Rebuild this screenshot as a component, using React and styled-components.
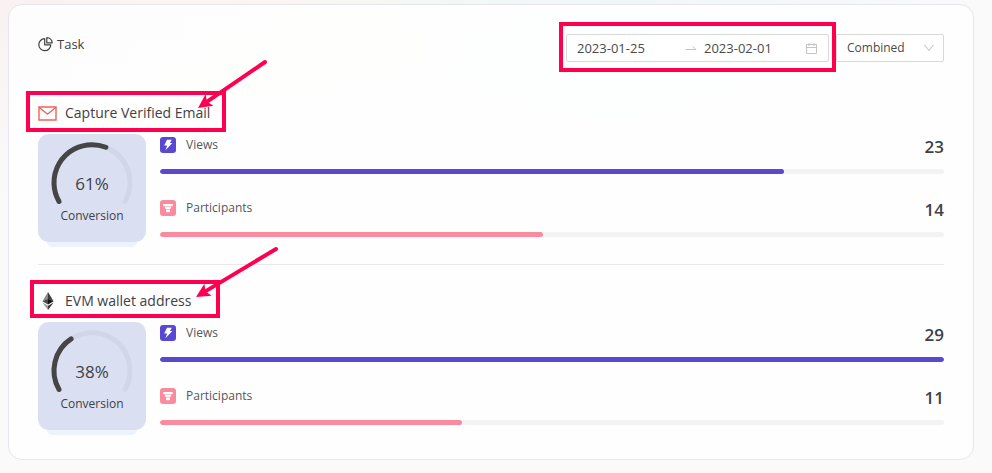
import React from "react";
import styled, { createGlobalStyle } from "styled-components";

const GlobalStyle = createGlobalStyle`
  *, *::before, *::after { box-sizing: border-box; }
  body {
    margin: 0;
    background:
      linear-gradient(to bottom, transparent, #fafafa 200px),
      linear-gradient(to right, #f9f1f2, #faf6f2 28%, #f3f8f5 48%, #f0f7f8 62%, #f6f7fb 85%, #fafafa);
    background-color: #fafafa;
    background-repeat: no-repeat;
    color: #3f4145;
    font-family: "Open Sans", "Noto Sans", sans-serif;
    font-size: 13px;
    line-height: 20px;
  }
  h2, h3, p { margin: 0; }
`;

const Page = styled.main`
  padding: 4px 18px 13px 8px;
`;

const Card = styled.section`
  padding: 29px;
  border: 1px solid #e6e7ec;
  border-radius: 14px;
  background: rgba(255, 255, 255, 0.82);
`;

const Header = styled.header`
  display: flex;
  align-items: center;
  justify-content: space-between;
  height: 28px;
`;

const Heading = styled.h2`
  display: flex;
  align-items: center;
  gap: 4px;
  align-self: flex-start;
  font-size: 13px;
  font-weight: 500;
  line-height: 20px;
`;

const Filters = styled.div`
  display: flex;
  gap: 7px;
`;

const Field = styled.div`
  position: relative;
  display: flex;
  align-items: center;
  width: ${(p) => p.$width}px;
  height: 28px;
  border: 1px solid #d9d9d9;
  border-radius: 2px;
  background: #fff;
  padding-left: 10px;
  padding-right: ${(p) => p.$end}px;
  svg { flex: none; }
`;

const DateInput = styled.input`
  flex: 1;
  min-width: 0;
  width: 0;
  padding: 0;
  border: 0;
  outline: 0;
  background: transparent;
  color: #4a4a4a;
  font: inherit;
  font-size: 13px;
`;

const Separator = styled.span`
  display: flex;
  width: 26px;
  justify-content: center;
`;

const Select = styled.select`
  appearance: none;
  flex: 1;
  min-width: 0;
  padding: 0;
  border: 0;
  outline: 0;
  background: transparent;
  color: #4a4a4a;
  font: inherit;
  font-size: 12px;
`;

const Highlight = styled.span`
  position: absolute;
  inset: ${(p) => p.$inset};
  border: 4px solid #ff0050;
  pointer-events: none;
`;

const Arrow = styled.svg`
  position: absolute;
  right: ${(p) => p.$right}px;
  bottom: ${(p) => p.$bottom}px;
`;

const Task = styled.article`
  padding-top: ${(p) => (p.$first ? "41px" : "26px")};
  & + & {
    margin-top: 22px;
    border-top: 1px solid #e8e8ea;
  }
`;

const TaskTitle = styled.h3`
  position: relative;
  display: inline-flex;
  align-items: center;
  gap: 8px;
  height: 20px;
  vertical-align: top;
  font-size: 14px;
  font-weight: 500;
`;

const IconSlot = styled.span`
  display: flex;
  justify-content: center;
  width: 19px;
`;

const TaskBody = styled.div`
  display: flex;
  gap: 14px;
  margin-top: 11px;
`;

const Conversion = styled.div`
  position: relative;
  display: flex;
  flex-direction: column;
  align-items: center;
  flex: none;
  width: 108px;
  height: 108px;
  padding-top: 6px;
  border-radius: 11px;
  background: #dae0f2;
  &::after {
    content: "";
    position: absolute;
    left: 9px;
    right: 9px;
    top: 100%;
    height: 5px;
    border-radius: 0 0 5px 5px;
    background: #eef2fb;
  }
`;

const Gauge = styled.div`
  display: grid;
  height: 66px;
  > * { grid-area: 1 / 1; }
`;

const GaugeValue = styled.span`
  align-self: start;
  justify-self: center;
  padding-top: 32px;
  font-size: 17px;
  font-weight: 500;
  line-height: 24px;
`;

const GaugeLabel = styled.span`
  font-size: 12px;
  font-weight: 500;
  line-height: 20px;
`;

const Metrics = styled.dl`
  display: flex;
  flex: 1;
  flex-direction: column;
  gap: 23px;
  min-width: 0;
  margin: 0;
`;

const Metric = styled.div`
  display: grid;
  grid-template-columns: 1fr auto;
  row-gap: 11px;
  padding-top: 1px;
`;

const MetricLabel = styled.dt`
  display: flex;
  align-items: center;
  gap: 10px;
  height: 19px;
  color: #55565a;
  font-size: 12px;
`;

const MetricValue = styled.dd`
  margin: 0;
  font-size: 17px;
  font-weight: 600;
  line-height: 24px;
  height: 23px;
`;

const Track = styled.div`
  grid-column: 1 / -1;
  height: 5px;
  border-radius: 3px;
  background: #f3f3f4;
  overflow: hidden;
`;

const Fill = styled.div`
  height: 100%;
  border-radius: 3px;
  background: ${(p) => p.$color};
`;

function PieIcon() {
  return (
    <svg width="15" height="15" viewBox="0 0 15 15" fill="none" stroke="#3f4145" strokeWidth="1.2" strokeLinejoin="round" aria-hidden="true">
      <path d="M6.7 1.7A6 6 0 1 0 12.8 7.8H6.7z" />
      <path d="M8.8.7V5.9H14.2A5.5 5.5 0 0 0 8.8.7z" />
    </svg>
  );
}

function CalendarIcon() {
  return (
    <svg width="13" height="13" viewBox="0 0 13 13" fill="none" stroke="#c4c4c4" aria-hidden="true">
      <path d="M1.5 2.5h10v9h-10zM1.5 5.5h10M4 1v3M9 1v3" />
    </svg>
  );
}

function SwapIcon() {
  return (
    <svg width="12" height="8" viewBox="0 0 12 8" fill="none" stroke="#c4c4c4" aria-hidden="true">
      <path d="M.5 5.5h10.4L7.6 2.2" />
    </svg>
  );
}

function ChevronIcon() {
  return (
    <svg width="12" height="12" viewBox="0 0 12 12" fill="none" stroke="#c4c4c4" strokeWidth="1.1" aria-hidden="true">
      <path d="M1.5 3l4.5 5.5L10.5 3" />
    </svg>
  );
}

function MailIcon() {
  return (
    <svg width="19" height="15" viewBox="0 0 19 15" fill="none" stroke="#ee6257" strokeWidth="1.4" aria-hidden="true">
      <path d="M1 1h17v13H1z" />
      <path d="M1 1.2l8.5 7 8.5-7" />
    </svg>
  );
}

function EthereumIcon() {
  return (
    <svg width="12" height="18" viewBox="0 0 12 18" aria-hidden="true">
      <path d="M6 0L.4 9.2 6 6.7z" fill="#8a8a8a" />
      <path d="M6 0l5.6 9.2L6 6.7z" fill="#3c3c3b" />
      <path d="M.4 9.2L6 6.7v5.8z" fill="#4a4a4a" />
      <path d="M11.6 9.2L6 6.7v5.8z" fill="#141414" />
      <path d="M.4 10.5L6 13.8V18z" fill="#9a9a9a" />
      <path d="M11.6 10.5L6 13.8V18z" fill="#3c3c3b" />
    </svg>
  );
}

function ViewsIcon() {
  return (
    <svg width="16" height="16" viewBox="0 0 16 16" aria-hidden="true">
      <rect width="16" height="16" rx="3" fill="#5949d2" />
      <path d="M7 2.8h4.8L9.9 6h2.5L5.4 13.2l1.8-4.6H4.2z" fill="#fff" />
    </svg>
  );
}

function FunnelIcon() {
  return (
    <svg width="16" height="16" viewBox="0 0 16 16" aria-hidden="true">
      <rect width="16" height="16" rx="3" fill="#fa8a9d" />
      <path d="M3.2 4h9.6v1.3L12.2 6.2H3.8l-.6-.9z" fill="#fff" />
      <path d="M4.4 6.7h7.2L10 9.2H6z" fill="#fff" />
      <path d="M6 9.7h4v2l-.7.5H6.7l-.7-.5z" fill="#fff" />
    </svg>
  );
}

const SWEEP = "M59 64.5A38 38 0 1 1 125 64.5";
const CAP_SHARE = 2;

function ConversionGauge({ percent }) {
  return (
    <Conversion>
      <Gauge>
        <svg width="88" height="66" viewBox="48 3 88 66" fill="none" strokeWidth="5" strokeLinecap="round" role="img" aria-label={`${percent}% conversion`}>
          <path d={SWEEP} stroke="#d1d6e8" />
          <path d={SWEEP} stroke="#454545" pathLength="100" strokeDasharray={`${percent - CAP_SHARE} 200`} />
        </svg>
        <GaugeValue>{percent}%</GaugeValue>
      </Gauge>
      <GaugeLabel>Conversion</GaugeLabel>
    </Conversion>
  );
}

function MetricRow({ icon, label, value, share, color }) {
  return (
    <Metric>
      <MetricLabel>{icon}{label}</MetricLabel>
      <MetricValue>{value}</MetricValue>
      <Track role="progressbar" aria-label={label} aria-valuenow={share}>
        <Fill $color={color} style={{ width: `${share}%` }} />
      </Track>
    </Metric>
  );
}

function PointerArrow({ width, height, right, bottom }) {
  const length = Math.hypot(width, height);
  const ux = width / length;
  const uy = -height / length;
  const bx = 14 * ux;
  const by = height + 14 * uy;
  return (
    <Arrow $right={right} $bottom={bottom} width={width} height={height} viewBox={`0 0 ${width} ${height}`} overflow="visible" aria-hidden="true">
      <path d={`M${width} 0L${8 * ux} ${height + 8 * uy}`} stroke="#ff0050" strokeWidth="4" strokeLinecap="round" />
      <path d={`M0 ${height}L${bx - 7 * uy} ${by + 7 * ux}L${11 * ux} ${height + 11 * uy}L${bx + 7 * uy} ${by - 7 * ux}z`} fill="#ff0050" />
    </Arrow>
  );
}

const tasks = [
  {
    title: "Capture Verified Email",
    icon: <MailIcon />,
    percent: 61,
    views: 23,
    viewsShare: 79.6,
    people: 14,
    peopleShare: 48.9,
    inset: "-12px auto -9px -12px",
    boxWidth: 200,
    arrow: { width: 67, height: 46, right: -43, bottom: 20 },
  },
  {
    title: "EVM wallet address",
    icon: <EthereumIcon />,
    percent: 38,
    views: 29,
    viewsShare: 100,
    people: 11,
    peopleShare: 38.5,
    inset: "-11px auto -7px -8px",
    boxWidth: 190,
    arrow: { width: 80, height: 48, right: -60, bottom: 17 },
  },
];

const TitleHighlight = styled(Highlight)`
  width: ${(p) => p.$width}px;
`;

export default function App() {
  return (
    <>
      <GlobalStyle />
      <Page>
        <Card>
          <Header>
            <Heading><PieIcon />Task</Heading>
            <Filters>
              <Field $width={263} $end={10}>
                <DateInput aria-label="Start date" defaultValue="2023-01-25" />
                <Separator><SwapIcon /></Separator>
                <DateInput aria-label="End date" defaultValue="2023-02-01" />
                <CalendarIcon />
                <Highlight $inset="-13px -8px -11px -8px" />
              </Field>
              <Field $width={108} $end={8}>
                <Select aria-label="View mode" defaultValue="Combined">
                  <option>Combined</option>
                </Select>
                <ChevronIcon />
              </Field>
            </Filters>
          </Header>
          {tasks.map((task, i) => (
            <Task key={task.title} $first={i === 0}>
              <TaskTitle>
                <IconSlot>{task.icon}</IconSlot>
                {task.title}
                <TitleHighlight $inset={task.inset} $width={task.boxWidth}>
                  <PointerArrow {...task.arrow} />
                </TitleHighlight>
              </TaskTitle>
              <TaskBody>
                <ConversionGauge percent={task.percent} />
                <Metrics>
                  <MetricRow icon={<ViewsIcon />} label="Views" value={task.views} share={task.viewsShare} color="#5949d2" />
                  <MetricRow icon={<FunnelIcon />} label="Participants" value={task.people} share={task.peopleShare} color="#fa8a9d" />
                </Metrics>
              </TaskBody>
            </Task>
          ))}
        </Card>
      </Page>
    </>
  );
}
